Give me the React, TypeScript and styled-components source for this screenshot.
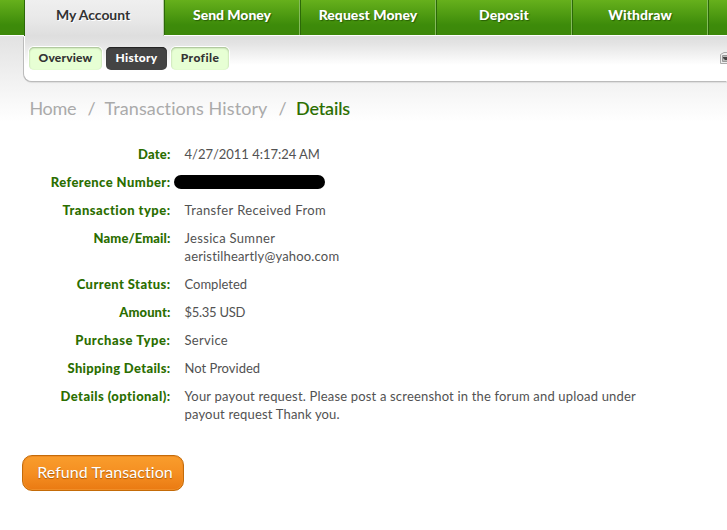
import React from 'react';
import styled, { createGlobalStyle, css } from 'styled-components';

const Global = createGlobalStyle`
  * { box-sizing: border-box; }
  body { margin: 0; background: #fff; font-family: Lato, "Noto Sans", sans-serif; overflow: hidden; }
`;
const Page = styled.div`
  height: 530px;
  background: linear-gradient(#e2e2e2 36px, #f2f2f2 82px, #fff 122px);
`;
const Nav = styled.nav`
  display: flex;
  height: 36px;
  padding-left: 24px;
  overflow: hidden;
  background: linear-gradient(#66b01c, #3d8b0a 25px, #3d880a 35px, #fff 35px);
`;
const NavItem = styled.a<{ $active?: boolean; $track?: number }>`
  flex: none;
  width: 136px;
  height: 35px;
  padding-top: 6px;
  text-align: center;
  color: #fff;
  font-size: 14px;
  font-weight: 900;
  line-height: 17px;
  letter-spacing: ${p => p.$track ?? 0}px;
  text-shadow: 1px 1px 1px #285f05;
  border-left: 1px solid #2c6908;
  border-right: 1px solid #85bb5c;
  ${p => p.$active && css`
    width: 140px;
    height: 36px;
    padding-right: 2px;
    color: #333;
    font-weight: 700;
    text-shadow: 1px 1px 0 #fff;
    background: linear-gradient(#efefef, #e9e9e9 18px, #dedede);
    border-right-color: #b8c9aa;
  `}
`;
const SubNav = styled.div`
  display: flex;
  align-items: flex-start;
  gap: 4px;
  height: 45px;
  margin-left: 24px;
  padding: 11px 0 0 4px;
  border-left: 1px solid #fff;
  border-bottom: 1px solid #fff;
  border-bottom-left-radius: 8px;
  background: linear-gradient(#dedede, #e3e3e3 7px, #fff 29px);
  box-shadow: -1px 1px 0 #bbb, 0 2px 1px #ddd;
`;
const Pill = styled.a<{ $w: number; $active?: boolean; $track: number }>`
  width: ${p => p.$w}px;
  height: 23px;
  border-radius: 5px;
  text-align: center;
  font-size: 12px;
  font-weight: 900;
  line-height: 22px;
  letter-spacing: ${p => p.$track}px;
  color: ${p => (p.$active ? '#fff' : '#333')};
  background: ${p => (p.$active ? '#444' : '#e7ffd4')};
  box-shadow: ${p => (p.$active ? 'inset 0 1px 1px #222' : 'inset 0 1px 2px #9fb88d, 0 0 0 1px #fff')};
`;
const Printer = styled.svg`
  flex: none;
  width: 14px;
  height: 16px;
  margin: 3px -7px 0 auto;
`;
const Crumbs = styled.div`
  display: flex;
  height: 28px;
  margin: 14px 0 0 29.5px;
  font-size: 18px;
  line-height: 26px;
  color: #aaa;
`;
const Crumb = styled.span<{ $w: number; $track: number; $current?: boolean }>`
  width: ${p => p.$w}px;
  white-space: nowrap;
  letter-spacing: ${p => p.$track}px;
  ${p => p.$current && css`color: #2b6e00; font-weight: 500; -webkit-text-stroke: .1px #2b6e00;`}
`;
const Details = styled.dl`
  display: grid;
  grid-template-columns: 170.5px 1fr;
  column-gap: 14px;
  row-gap: 10px;
  margin: 22px 0 0;
  font-size: 13px;
  line-height: 18px;
`;
const Label = styled.dt<{ $track: number }>`
  text-align: right;
  font-weight: 900;
  color: #2b6e00;
  letter-spacing: ${p => p.$track}px;
`;
const Value = styled.dd`
  margin: 0;
  color: #525252;
`;
const Line = styled.div<{ $track: number }>`
  white-space: nowrap;
  letter-spacing: ${p => p.$track}px;
`;
const Redaction = styled.div`
  width: 151px;
  height: 14px;
  margin: 2px 0 0 -11px;
  border-radius: 7px;
  background: #000;
`;
const Refund = styled.button`
  display: block;
  width: 162px;
  height: 36px;
  margin: 32px 0 0 22px;
  padding: 0 0 2px 4px;
  border: 1px solid #c46b08;
  border-radius: 10px;
  color: #fff;
  font: 400 16px/20px Lato, sans-serif;
  letter-spacing: .08px;
  white-space: nowrap;
  text-shadow: 0 1px 1px #a85a08;
  background: linear-gradient(#f99d2c, #f58f22 50%, #ea7a12);
  box-shadow: inset 0 0 0 1px #f08d26;
`;

const nav = [
  { t: 'My Account', k: -0.06, active: true },
  { t: 'Send Money', k: -0.05 },
  { t: 'Request Money', k: 0.03 },
  { t: 'Deposit', k: 0.1 },
  { t: 'Withdraw', k: 0.05 },
  { t: '', k: 0 },
];
const rows: { label: string; k: number; lines: [string, number][] }[] = [
  { label: 'Date:', k: 0.2, lines: [['4/27/2011 4:17:24 AM', -0.02]] },
  { label: 'Reference Number:', k: 0.42, lines: [] },
  { label: 'Transaction type:', k: 0.47, lines: [['Transfer Received From', 0.38]] },
  { label: 'Name/Email:', k: 0.12, lines: [['Jessica Sumner', 0.32], ['aeristilheartly@yahoo.com', 0.17]] },
  { label: 'Current Status:', k: 0.42, lines: [['Completed', 0]] },
  { label: 'Amount:', k: 0.1, lines: [['$5.35 USD', -0.27]] },
  { label: 'Purchase Type:', k: 0.56, lines: [['Service', 0.3]] },
  { label: 'Shipping Details:', k: 0.32, lines: [['Not Provided', 0]] },
  {
    label: 'Details (optional):', k: 0.42,
    lines: [
      ['Your payout request. Please post a screenshot in the forum and upload under', 0.18],
      ['payout request Thank you.', 0.17],
    ],
  },
];

export default function App() {
  return (
    <Page>
      <Global />
      <Nav>
        {nav.map(n => <NavItem key={n.t} $active={n.active} $track={n.k}>{n.t}</NavItem>)}
      </Nav>
      <SubNav>
        <Pill $w={73} $track={0.2}>Overview</Pill>
        <Pill $w={61} $track={0.3} $active>History</Pill>
        <Pill $w={58} $track={0.45}>Profile</Pill>
        <Printer viewBox="0 0 14 16">
          <path d="M.5 4.5 4 2.5h7l2.5 2v9H.5z" fill="#eee" stroke="#aaa" />
          <path d="M2.5 5.5h9v6h-9z" fill="#bbb" stroke="#999" />
          <path d="M3 7h8v3H5L3 8z" fill="#444" />
        </Printer>
      </SubNav>
      <Crumbs>
        <Crumb $w={58} $track={-0.35}>Home</Crumb>
        <Crumb $w={17} $track={0}>/</Crumb>
        <Crumb $w={174} $track={0.1}>Transactions History</Crumb>
        <Crumb $w={17.5} $track={0}>/</Crumb>
        <Crumb $w={60} $track={-0.15} $current>Details</Crumb>
      </Crumbs>
      <Details>
        {rows.map(r => (
          <React.Fragment key={r.label}>
            <Label $track={r.k}>{r.label}</Label>
            <Value>
              {r.lines.length ? r.lines.map(([t, k]) => <Line key={t} $track={k}>{t}</Line>) : <Redaction />}
            </Value>
          </React.Fragment>
        ))}
      </Details>
      <Refund>Refund Transaction</Refund>
    </Page>
  );
}
